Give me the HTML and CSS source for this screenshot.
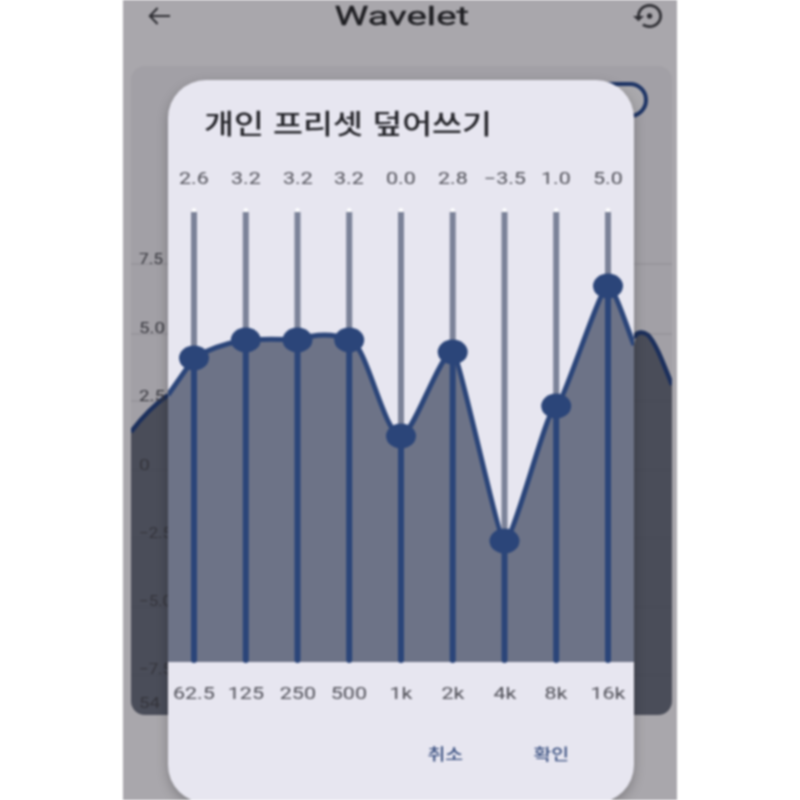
FILE: index.html
```html
<!DOCTYPE html>
<html lang="ko">
<head>
<meta charset="utf-8">
<title>Wavelet</title>
<link rel="stylesheet" href="styles.css">
</head>
<body>
<main class="phone">
  <header class="topbar">
    <svg class="icon-back" viewBox="0 0 24 18" preserveAspectRatio="none"><path d="M23 9H2M10 1 2 9l8 8" /></svg>
    <h1 class="app-title"><span>Wavelet</span></h1>
    <svg class="icon-reset" viewBox="0 3 21 18" preserveAspectRatio="none"><path d="M14 12c0-1.1-.9-2-2-2s-2 .9-2 2 .9 2 2 2 2-.9 2-2zm-2-9c-4.97 0-9 4.03-9 9H0l4 4 4-4H5c0-3.87 3.13-7 7-7s7 3.13 7 7-3.13 7-7 7c-1.51 0-2.91-.49-4.06-1.3l-1.42 1.44C8.04 20.3 9.94 21 12 21c4.97 0 9-4.03 9-9s-4.03-9-9-9z"/></svg>
  </header>

  <section class="card">
    <div class="toggle"></div>
    <svg class="back-chart" viewBox="131 250 541 465">
      <path class="back-area" d="M131 432C142 417 154 405 168 395L634 345C636 333 642 331 648 335C656 343 664 365 672 385V715H131Z"/>
      <path class="back-line" d="M131 432C142 417 154 405 168 395M634 338C636 332 642 331 648 335C656 343 664 365 672 385"/>
      <g class="grid-lines">
        <path d="M131 264H672M131 334H672M131 401H672M131 470H672M131 538H672M131 607H672M131 675H672"/>
      </g>
      <g class="axis">
        <text x="139" y="264" textLength="24" lengthAdjust="spacingAndGlyphs">7.5</text>
        <text x="139" y="333" textLength="26" lengthAdjust="spacingAndGlyphs">5.0</text>
        <text x="139" y="401" textLength="26" lengthAdjust="spacingAndGlyphs">2.5</text>
        <text x="139" y="470" textLength="11" lengthAdjust="spacingAndGlyphs">0</text>
        <text x="139" y="538" textLength="33" lengthAdjust="spacingAndGlyphs">−2.5</text>
        <text x="139" y="606" textLength="33" lengthAdjust="spacingAndGlyphs">−5.0</text>
        <text x="139" y="674" textLength="33" lengthAdjust="spacingAndGlyphs">−7.5</text>
        <text x="139" y="708" textLength="21" lengthAdjust="spacingAndGlyphs">54</text>
      </g>
    </svg>
  </section>

  <div class="dialog">
    <h2 class="dialog-title"><span>개인 프리셋 덮어쓰기</span></h2>
    <div class="band-row values">
      <span>2.6</span><span>3.2</span><span>3.2</span><span>3.2</span><span>0.0</span><span>2.8</span><span>−3.5</span><span>1.0</span><span>5.0</span>
    </div>
    <svg class="eq" viewBox="168 208 466 456">
      <path class="eq-area" d="M168 395L194 358C210 348 228 343 245.5 340C262 339 280 339 297.5 340C312 335 330 332 349 340C366 340 384 436 401 436C413 436 440 352 452.5 352C459 352 498 541 504.5 541C514 541 547 406 556 406C563 406 600 286 608 286C614 286 628 330 634 345V662H168Z"/>
      <g class="tips">
        <path d="M194 210v3M245.8 210v3M297.5 210v3M349.2 210v3M401 210v3M452.7 210v3M504.5 210v3M556.2 210v3M608 210v3"/>
      </g>
      <g class="rail">
        <path d="M194 212V358M245.8 212V340M297.5 212V340M349.2 212V340M401 212V436M452.7 212V352M504.5 212V541M556.2 212V406M608 212V286"/>
      </g>
      <g class="fill">
        <path d="M194 358V660M245.8 340V660M297.5 340V660M349.2 340V660M401 436V660M452.7 352V660M504.5 541V660M556.2 406V660M608 286V660"/>
      </g>
      <path class="eq-line" d="M168 395L194 358C210 348 228 343 245.5 340C262 339 280 339 297.5 340C312 335 330 332 349 340C366 340 384 436 401 436C413 436 440 352 452.5 352C459 352 498 541 504.5 541C514 541 547 406 556 406C563 406 600 286 608 286C614 286 628 330 634 345"/>
      <g class="knobs">
        <ellipse cx="194" cy="358" rx="15" ry="12.5"/>
        <ellipse cx="245.8" cy="340" rx="15" ry="12.5"/>
        <ellipse cx="297.5" cy="340" rx="15" ry="12.5"/>
        <ellipse cx="349.2" cy="340" rx="15" ry="12.5"/>
        <ellipse cx="401" cy="436" rx="15" ry="12.5"/>
        <ellipse cx="452.7" cy="352" rx="15" ry="12.5"/>
        <ellipse cx="504.5" cy="541" rx="15" ry="12.5"/>
        <ellipse cx="556.2" cy="406" rx="15" ry="12.5"/>
        <ellipse cx="608" cy="286" rx="15" ry="12.5"/>
      </g>
    </svg>
    <div class="band-row freqs">
      <span>62.5</span><span>125</span><span>250</span><span>500</span><span>1k</span><span>2k</span><span>4k</span><span>8k</span><span>16k</span>
    </div>
    <div class="actions">
      <button class="action"><span>취소</span></button>
      <button class="action"><span>확인</span></button>
    </div>
  </div>
</main>
</body>
</html>
```
FILE: styles.css
```css
html, body {
  margin: 0;
  height: 800px;
  overflow: hidden;
  background: #fff;
}
.phone {
  position: relative;
  width: 554px;
  height: 800px;
  margin: 0 auto;
  background: #a9a7ac;
  overflow: hidden;
  filter: blur(0.8px);
  font-family: Roboto, "Noto Sans CJK KR", sans-serif;
}
.topbar {
  display: flex;
  align-items: center;
  justify-content: space-between;
  height: 32px;
  padding: 0 15px 0 25px;
}
.icon-back {
  width: 23px;
  height: 18px;
  fill: none;
  stroke: #2e2e33;
  stroke-width: 2.2;
}
.icon-reset {
  width: 29px;
  height: 24px;
  fill: #2e2e33;
}
.app-title {
  margin: 0;
  font-size: 26px;
  font-weight: 400;
  line-height: 32px;
  color: #1e1e22;
  -webkit-text-stroke: 0.4px #1e1e22;
}
.app-title span {
  display: inline-block;
  transform: scaleX(1.47);
}
.card {
  display: flex;
  flex-direction: column;
  height: 649px;
  margin: 34px 5px 0 8px;
  border-radius: 14px;
  background: #a2a0a6;
  overflow: hidden;
}
.toggle {
  align-self: flex-end;
  box-sizing: border-box;
  width: 60px;
  height: 36px;
  margin: 16px 24px 0 0;
  border: 4.5px solid #1e3566;
  border-radius: 18px;
  background: #aaa9ad;
}
.back-chart {
  display: block;
  width: 541px;
  height: 465px;
  margin-top: auto;
}
.back-area { fill: #4a4d59; }
.back-line {
  fill: none;
  stroke: #1b2f5c;
  stroke-width: 4.5;
}
.grid-lines path {
  fill: none;
  stroke: rgba(60, 60, 70, .2);
  stroke-width: 1;
}
.axis text {
  font-family: Roboto, sans-serif;
  font-size: 14.5px;
  fill: #35353c;
}
.dialog {
  position: absolute;
  left: 45px;
  top: 80px;
  display: flex;
  flex-direction: column;
  box-sizing: border-box;
  width: 466px;
  height: 723px;
  border-radius: 38px;
  background: #e7e6f0;
  box-shadow: 0 4px 12px rgba(0, 0, 0, .25);
}
.dialog-title {
  height: 36px;
  margin: 24px 0 0;
  padding-left: 36px;
  font-family: "Noto Sans CJK KR", sans-serif;
  font-size: 27.5px;
  font-weight: 500;
  line-height: 36px;
  color: #25252a;
  white-space: nowrap;
}
.dialog-title span {
  display: inline-block;
  transform: scaleX(1.185);
  transform-origin: left center;
}
.band-row {
  display: grid;
  grid-template-columns: repeat(9, 1fr);
  height: 20px;
  line-height: 20px;
  font-size: 16.5px;
  color: #505058;
  text-align: center;
}
.band-row span {
  display: inline-block;
  transform: scaleX(1.3);
}
.values { margin-top: 29px; }
.freqs { margin-top: 20px; }
.eq {
  display: block;
  width: 466px;
  height: 456px;
  margin-top: 19px;
}
.eq-area { fill: #6d7387; }
.tips path {
  fill: none;
  stroke: #fff;
  stroke-width: 4;
  stroke-linecap: round;
}
.rail path {
  fill: none;
  stroke: #7b8298;
  stroke-width: 6;
}
.fill path {
  fill: none;
  stroke: #2b4579;
  stroke-width: 6;
  stroke-linecap: round;
}
.eq-line {
  fill: none;
  stroke: #2b4579;
  stroke-width: 5;
}
.knobs ellipse { fill: #2b4579; }
.actions {
  display: flex;
  justify-content: flex-end;
  gap: 70px;
  margin-top: 36px;
  padding-right: 65px;
}
.action {
  width: 36px;
  height: 26px;
  padding: 0;
  border: 0;
  background: none;
  font-family: "Noto Sans CJK KR", sans-serif;
  font-size: 15.5px;
  font-weight: 500;
  line-height: 26px;
  color: #3a5080;
  white-space: nowrap;
}
.action span {
  display: inline-block;
  transform: scaleX(1.25);
}
```
